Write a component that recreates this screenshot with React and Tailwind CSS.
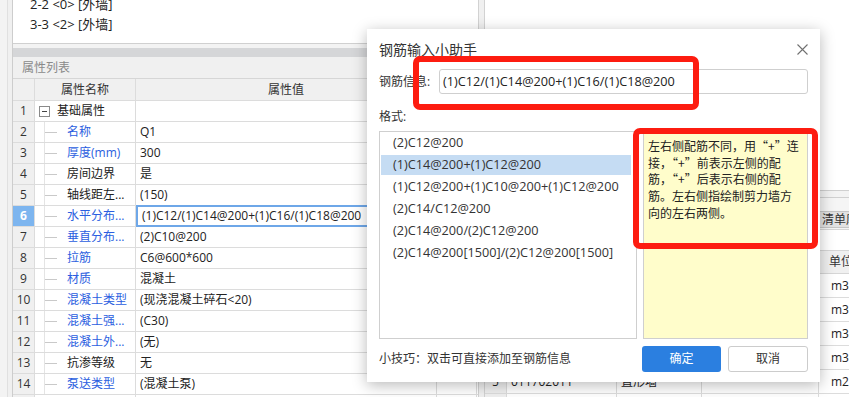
import React from 'react';

const rows = [
  { n: 1, group: true, name: '基础属性', value: '' },
  { n: 2, name: '名称', value: 'Q1', blue: true },
  { n: 3, name: '厚度(mm)', value: '300', blue: true },
  { n: 4, name: '房间边界', value: '是' },
  { n: 5, name: '轴线距左...', value: '(150)' },
  { n: 6, name: '水平分布...', value: '(1)C12/(1)C14@200+(1)C16/(1)C18@200', blue: true, sel: true },
  { n: 7, name: '垂直分布...', value: '(2)C10@200', blue: true },
  { n: 8, name: '拉筋', value: 'C6@600*600', blue: true },
  { n: 9, name: '材质', value: '混凝土', blue: true },
  { n: 10, name: '混凝土类型', value: '(现浇混凝土碎石<20)', blue: true },
  { n: 11, name: '混凝土强...', value: '(C30)', blue: true },
  { n: 12, name: '混凝土外...', value: '(无)', blue: true },
  { n: 13, name: '抗渗等级', value: '无' },
  { n: 14, name: '泵送类型', value: '(混凝土泵)', blue: true },
  { n: 15, name: '', value: '' },
];

const rightRows = [
  { n: '1', code: '010504001', name: '直形墙', unit: 'm3' },
  { n: '', code: '5-28', name: '现浇混凝土墙', unit: 'm3' },
  { n: '2', code: '010504002', name: '弧形墙', unit: 'm3' },
  { n: '', code: '5-29', name: '现浇混凝土墙', unit: 'm3' },
  { n: '5', code: '011702011', name: '直形墙', unit: 'm2' },
  { n: '', code: '', name: '', unit: '' },
];

const formats = [
  '(2)C12@200',
  '(1)C14@200+(1)C12@200',
  '(1)C12@200+(1)C10@200+(1)C12@200',
  '(2)C14/C12@200',
  '(2)C14@200/(2)C12@200',
  '(2)C14@200[1500]/(2)C12@200[1500]',
];

function PropRow({ r }) {
  return (
    <div className="flex h-[21px] shrink-0 border-b border-[#dcdcdc]">
      <div
        className={
          r.sel
            ? 'flex w-[22px] shrink-0 items-center justify-center border-r border-[#dcdcdc] bg-[#7db5ef] font-bold text-white'
            : 'flex w-[22px] shrink-0 items-center justify-center border-r border-[#dcdcdc] bg-[#f0f0f0] text-[#333]'
        }
      >
        {r.n < 15 ? r.n : ''}
      </div>
      <div className="flex w-[101px] shrink-0 items-center overflow-hidden whitespace-nowrap border-r border-[#dcdcdc]">
        {r.group ? (
          <>
            <span className="ml-[4px] flex h-[11px] w-[11px] items-center justify-center border border-[#8a8a8a] bg-white">
              <span className="h-px w-[5px] bg-[#444]" />
            </span>
            <span className="ml-[7px] text-[#222]">{r.name}</span>
          </>
        ) : r.n < 15 ? (
          <div className="ml-[9px] flex h-full items-center border-l border-[#e4e4e4]">
            <span className="h-px w-[12px] bg-[#c9c9c9]" />
            <span className={r.blue ? 'ml-[10px] text-[#2b5ee0]' : 'ml-[10px] text-[#222]'}>{r.name}</span>
          </div>
        ) : null}
      </div>
      {r.sel ? (
        <div className="relative z-10 -mt-px flex h-[22px] w-[301px] shrink-0 items-center overflow-hidden whitespace-nowrap border-2 border-[#6ea7e8] bg-white pl-[4px] text-[#222]">
          {r.value}
        </div>
      ) : (
        <div className="flex w-[301px] shrink-0 items-center overflow-hidden whitespace-nowrap border-r border-[#dcdcdc] pl-[4px] text-[#222]">
          {r.value}
        </div>
      )}
      <div className="w-[40px] shrink-0 border-r border-[#dcdcdc]" />
    </div>
  );
}

export default function App() {
  return (
    <div className="relative flex h-[397px] w-[849px] overflow-hidden bg-white text-[12px] text-[#333] font-['Open_Sans','Noto_Sans_CJK_SC',sans-serif]">
      {/* left gutter */}
      <div className="flex w-[13px] shrink-0">
        <div className="w-[8px] border-r border-[#e0e0e0] bg-[#f3f3f3]" />
        <div className="flex-1 border-r border-[#cdcdcd] bg-[#f0f0f0]" />
      </div>

      {/* left panel */}
      <div className="flex w-[465px] shrink-0 flex-col">
        <div className="h-[44px] shrink-0 overflow-hidden border-b border-[#d0d0d0] bg-white">
          <div className="-mt-[6px] pl-[17px] text-[13px] text-[#222]">
            <div className="h-[20px] whitespace-pre leading-[20px]">2-2 &lt;0&gt; [外墙]</div>
            <div className="h-[20px] whitespace-pre leading-[20px]">3-3 &lt;2&gt; [外墙]</div>
          </div>
        </div>
        <div className="h-[4px] shrink-0 bg-[#f3f3f3]" />
        <div className="h-[9px] shrink-0 bg-[#d5d6d8]" />
        <div className="flex h-[22px] shrink-0 items-center border-b border-[#d6d6d6] bg-[#f0f0f0] pl-[9px] text-[#8a8a8a]">
          属性列表
        </div>
        <div className="flex h-[22px] shrink-0 border-b border-[#dcdcdc] bg-[#f0f0f0] text-[#333]">
          <div className="w-[22px] shrink-0 border-r border-[#dcdcdc]" />
          <div className="flex w-[101px] shrink-0 items-center justify-center border-r border-[#dcdcdc]">属性名称</div>
          <div className="flex w-[301px] shrink-0 items-center justify-center border-r border-[#dcdcdc]">属性值</div>
          <div className="flex w-[40px] shrink-0 items-center justify-center border-r border-[#dcdcdc]">附加</div>
        </div>
        {rows.map((r) => (
          <PropRow key={r.n} r={r} />
        ))}
      </div>

      {/* splitter */}
      <div className="w-[7px] shrink-0 border-x border-[#d2d2d2] bg-[#f0f0f0]" />

      {/* right panel */}
      <div className="flex w-[364px] shrink-0 flex-col overflow-hidden">
        <div className="h-[190px] shrink-0 bg-white" />
        <div className="h-[8px] shrink-0 border-y border-[#d0d0d0] bg-[#f3f3f3]" />
        <div className="flex h-[32px] shrink-0 items-start border-b border-[#d6d6d6] bg-[#f5f5f5] pl-[333px] pt-[13px]">
          <div className="flex h-[17px] items-center whitespace-nowrap border border-[#c6c6c6] bg-[#e2e2e2] px-[3px] text-[#333]">
            清单库
          </div>
        </div>
        <div className="h-[20px] shrink-0 bg-white" />
        <div className="flex h-[24px] shrink-0 border-y border-[#d6d6d6] bg-[#f0f0f0] text-[#333]">
          <div className="w-[22px] shrink-0 border-r border-[#dcdcdc]" />
          <div className="flex w-[110px] shrink-0 items-center justify-center border-r border-[#dcdcdc]">编码</div>
          <div className="flex w-[85px] shrink-0 items-center justify-center border-r border-[#dcdcdc]">名称</div>
          <div className="flex w-[117px] shrink-0 items-center justify-center border-r border-[#dcdcdc]">项目特征</div>
          <div className="flex w-[60px] shrink-0 items-center whitespace-nowrap pl-[10px]">单位</div>
        </div>
        {rightRows.map((r, i) => (
          <div key={i} className="flex h-[24px] shrink-0 border-b border-[#dcdcdc] text-[#222]">
            <div className="flex w-[22px] shrink-0 items-center justify-center border-r border-[#dcdcdc] bg-[#f0f0f0]">{r.n}</div>
            <div className="flex w-[110px] shrink-0 items-center border-r border-[#dcdcdc] pl-[4px]">{r.code}</div>
            <div className="flex w-[85px] shrink-0 items-center border-r border-[#dcdcdc] pl-[4px]">{r.name}</div>
            <div className="w-[117px] shrink-0 border-r border-[#dcdcdc]" />
            <div className="flex w-[60px] shrink-0 items-center pl-[12px]">{r.unit}</div>
          </div>
        ))}
      </div>

      {/* dialog */}
      <div className="absolute left-[367px] top-[29px] z-30 flex h-[353px] w-[453px] flex-col bg-white px-[12px] shadow-[0_3px_14px_rgba(0,0,0,0.28)]">
        <div className="flex h-[40px] shrink-0 items-center justify-between">
          <span className="text-[14px] text-[#333]">钢筋输入小助手</span>
          <svg width="11" height="11" viewBox="0 0 11 11">
            <path d="M0.5 0.5L10.5 10.5M10.5 0.5L0.5 10.5" stroke="#707070" strokeWidth="1.1" fill="none" />
          </svg>
        </div>
        <div className="flex h-[25px] shrink-0 items-center">
          <span className="w-[60px] shrink-0 text-[#333]">钢筋信息:</span>
          <div className="flex h-[25px] flex-1 items-center whitespace-nowrap rounded-[3px] border border-[#cfcfcf] pl-[3px] text-[12.7px] text-[#222]">
            (1)C12/(1)C14@200+(1)C16/(1)C18@200
          </div>
        </div>
        <div className="mt-[13px] h-[20px] shrink-0 leading-[20px] text-[#333]">格式:</div>
        <div className="mt-[4px] flex h-[208px] shrink-0 gap-[6px]">
          <div className="w-[258px] shrink-0 border border-[#cfcfcf] pl-[1px]">
            {formats.map((f, i) => (
              <div key={f} className="mr-[5px] h-[22px] py-[1px]">
                <div
                  className={
                    i === 1
                      ? 'flex h-[20px] items-center whitespace-nowrap bg-[#c5dcf3] pl-[12px] text-[12.7px] text-[#333]'
                      : 'flex h-[20px] items-center whitespace-nowrap pl-[12px] text-[12.7px] text-[#333]'
                  }
                >
                  {f}
                </div>
              </div>
            ))}
          </div>
          <div
            lang="zh-CN"
            className="flex-1 border border-[#cfcfcf] bg-[#fffdcb] pl-[4px] pt-[6px] leading-[16.7px] text-[#222] font-['Noto_Sans_CJK_SC',sans-serif]"
          >
            <div className="whitespace-nowrap">左右侧配筋不同，用“+”连</div>
            <div className="whitespace-nowrap">接，“+”前表示左侧的配</div>
            <div className="whitespace-nowrap">筋，“+”后表示右侧的配</div>
            <div className="whitespace-nowrap">筋。左右侧指绘制剪力墙方</div>
            <div className="whitespace-nowrap">向的左右两侧。</div>
          </div>
        </div>
        <div className="mt-[7px] flex h-[26px] shrink-0 items-center">
          <span className="flex-1 text-[#333]">小技巧：双击可直接添加至钢筋信息</span>
          <div className="flex h-[26px] w-[79px] items-center justify-center rounded-[3px] bg-[#2b7fe0] text-white">确定</div>
          <div className="ml-[7px] flex h-[26px] w-[80px] items-center justify-center rounded-[3px] border border-[#cccccc] bg-white text-[#333]">
            取消
          </div>
        </div>

        {/* annotation boxes */}
        <div className="absolute left-[46px] top-[27px] h-[54px] w-[286px] rounded-[7px] border-[6px] border-[#fd1c10]" />
        <div className="absolute left-[266px] top-[99px] h-[121px] w-[185px] rounded-[7px] border-[6px] border-[#fd1c10]" />
      </div>
    </div>
  );
}
